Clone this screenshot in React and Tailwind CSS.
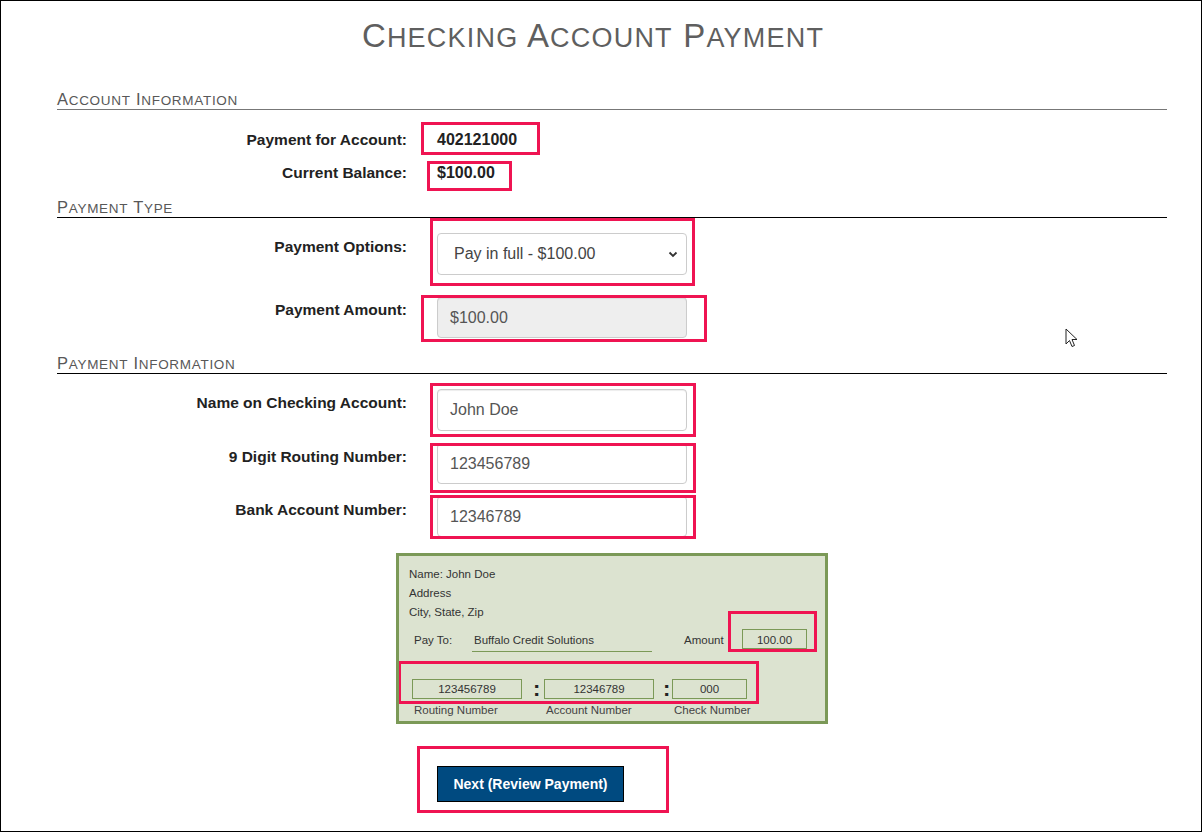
import React from 'react';

const Mark = ({ className }) => (
    <div className={`pointer-events-none absolute border-[3px] border-[#ef1452] ${className}`} />
);

const SectionHead = ({ words, line, className }) => (
    <div className={`h-[20px] border-b leading-[19px] text-[#585858] tracking-[0.7px] ${line} ${className}`}>
        {words.map((w, i) => (
            <span key={i}>
                {i > 0 && <span className="text-[16.5px]"> </span>}
                <span className="text-[16.5px]">{w[0]}</span>
                <span className="text-[13.5px]">{w.slice(1).toUpperCase()}</span>
            </span>
        ))}
    </div>
);

const Label = ({ children, className = '' }) => (
    <div className={`w-[350px] shrink-0 text-right text-[15.5px] font-bold leading-[22px] text-[#222] ${className}`}>
        {children}
    </div>
);

const TextBox = ({ value, height = 'h-[41px]', disabled }) => (
    <div className={`flex w-[250px] items-center rounded-[4px] border border-[#cccccc] pl-[12px] text-[16px] text-[#555] shadow-[inset_0_1px_1px_rgba(0,0,0,0.075)] ${height} ${disabled ? 'bg-[#eeeeee]' : 'bg-white'}`}>
        {value}
    </div>
);

export default function App() {
    return (
        <div className="relative h-[832px] w-[1202px] overflow-hidden border border-black bg-white font-['Liberation_Sans',Arial,sans-serif]">
            <h1 className="mt-[15px] pr-[16px] text-center leading-[40px] tracking-[1.2px] text-[#5f5f5f]">
                <span className="text-[33px]">C</span><span className="text-[27px]">HECKING</span>
                <span className="text-[33px]"> A</span><span className="text-[27px]">CCOUNT</span>
                <span className="text-[33px]"> P</span><span className="text-[27px]">AYMENT</span>
            </h1>

            <div className="ml-[56px] w-[1110px]">
                <SectionHead words={['Account', 'Information']} line="border-[#777]" className="mt-[28px]" />

                <div className="mt-[19px] flex">
                    <Label>Payment for Account:</Label>
                    <div className="relative ml-[30px] text-[16px] font-bold leading-[22px] text-[#222]">
                        402121000
                        <Mark className="left-[-16px] top-[-7px] h-[33px] w-[119px]" />
                    </div>
                </div>
                <div className="mt-[11px] flex">
                    <Label>Current Balance:</Label>
                    <div className="relative ml-[30px] text-[16px] font-bold leading-[22px] text-[#222]">
                        $100.00
                        <Mark className="left-[-10px] top-[-1px] h-[30px] w-[85px]" />
                    </div>
                </div>

                <SectionHead words={['Payment', 'Type']} line="border-black" className="mt-[14px]" />

                <div className="mt-[15px] flex">
                    <Label className="pt-[3px]">Payment Options:</Label>
                    <div className="relative ml-[30px]">
                        <div className="flex h-[42px] w-[250px] items-center justify-between rounded-[4px] border border-[#cccccc] bg-white pl-[16px] pr-[8px] text-[16px] text-[#444]">
                            <span>Pay in full - $100.00</span>
                            <svg width="10" height="7" viewBox="0 0 10 7" className="mt-[1px]">
                                <path d="M1.5 1.5 L5 5 L8.5 1.5" fill="none" stroke="#333" strokeWidth="1.8" />
                            </svg>
                        </div>
                        <Mark className="left-[-7px] top-[-15px] h-[68px] w-[265px]" />
                    </div>
                </div>

                <div className="mt-[22px] flex">
                    <Label className="pt-[2px]">Payment Amount:</Label>
                    <div className="relative ml-[30px]">
                        <TextBox value="$100.00" disabled />
                        <Mark className="left-[-16px] top-[-2px] h-[47px] w-[286px]" />
                    </div>
                </div>

                <SectionHead words={['Payment', 'Information']} line="border-black" className="mt-[16px]" />

                <div className="mt-[15px] flex">
                    <Label className="pt-[3px]">Name on Checking Account:</Label>
                    <div className="relative ml-[30px]">
                        <TextBox value="John Doe" height="h-[42px]" />
                        <Mark className="left-[-7px] top-[-6px] h-[54px] w-[266px]" />
                    </div>
                </div>
                <div className="mt-[12px] flex">
                    <Label className="pt-[3px]">9 Digit Routing Number:</Label>
                    <div className="relative ml-[30px]">
                        <TextBox value="123456789" />
                        <Mark className="left-[-7px] top-[0px] h-[50px] w-[266px]" />
                    </div>
                </div>
                <div className="mt-[12px] flex">
                    <Label className="pt-[3px]">Bank Account Number:</Label>
                    <div className="relative ml-[30px]">
                        <TextBox value="12346789" />
                        <Mark className="left-[-7px] top-[-1px] h-[44px] w-[266px]" />
                    </div>
                </div>

                {/* check preview */}
                <div className="mx-auto mt-[16px] h-[171px] w-[432px] overflow-hidden border-[3px] border-[#7b9957] bg-[#dce3d0] text-[11.5px] text-[#333]">
                    <div className="pl-[10px] pt-[9px] leading-[19px]">
                        <div>Name: John Doe</div>
                        <div>Address</div>
                        <div>City, State, Zip</div>
                    </div>
                    <div className="mt-[7px] flex items-start pl-[15px]">
                        <span className="w-[58px] leading-[22px]">Pay To:</span>
                        <span className="h-[23px] w-[180px] border-b border-[#7b9957] pl-[2px] leading-[22px]">Buffalo Credit Solutions</span>
                        <span className="ml-[32px] w-[58px] leading-[22px]">Amount</span>
                        <div className="relative">
                            <div className="h-[20px] w-[65px] border border-[#7b9957] text-center leading-[20px]">100.00</div>
                            <Mark className="left-[-14px] top-[-18px] h-[41px] w-[89px]" />
                        </div>
                    </div>
                    <div className="relative mt-[27px] flex pl-[13px]">
                        <div className="h-[20px] w-[110px] border border-[#7b9957] text-center leading-[19px]">123456789</div>
                        <span className="w-[22px] pl-[11px] text-[22px] font-bold leading-[20px] text-[#222]">:</span>
                        <div className="h-[20px] w-[110px] border border-[#7b9957] text-center leading-[19px]">12346789</div>
                        <span className="w-[18px] pl-[9px] text-[22px] font-bold leading-[20px] text-[#222]">:</span>
                        <div className="h-[20px] w-[75px] border border-[#7b9957] text-center leading-[19px]">000</div>
                        <Mark className="left-[-1px] top-[-18px] h-[43px] w-[361px]" />
                    </div>
                    <div className="mt-[3px] flex pl-[15px] leading-[16px] text-[#444]">
                        <span className="w-[132px]">Routing Number</span>
                        <span className="w-[128px]">Account Number</span>
                        <span>Check Number</span>
                    </div>
                </div>

                <div className="relative ml-[380px] mt-[42px] w-[187px]">
                    <button className="h-[36px] w-[187px] border border-black bg-[#004a80] text-[14px] font-bold text-white">
                        Next (Review Payment)
                    </button>
                    <Mark className="left-[-20px] top-[-20px] h-[67px] w-[252px]" />
                </div>
            </div>

            {/* mouse pointer */}
            <svg className="absolute left-[1064px] top-[327px]" width="13" height="20" viewBox="0 0 13 20">
                <path d="M1 1 L1 16 L4.5 12.5 L7 18.5 L9.5 17.5 L7 11.5 L12 11.5 Z" fill="white" stroke="#222" strokeWidth="1" strokeLinejoin="round" />
            </svg>
        </div>
    );
}
